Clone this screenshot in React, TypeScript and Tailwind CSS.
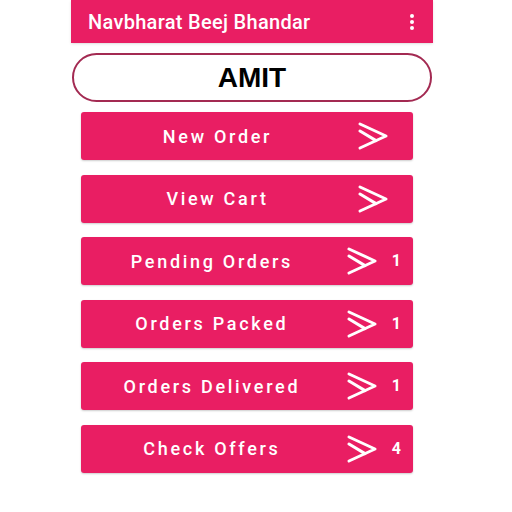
const items: { label: string; count?: number }[] = [
  { label: "New Order" },
  { label: "View Cart" },
  { label: "Pending Orders", count: 1 },
  { label: "Orders Packed", count: 1 },
  { label: "Orders Delivered", count: 1 },
  { label: "Check Offers", count: 4 },
];

function DoubleArrow() {
  return (
    <svg width="30" height="28" viewBox="0 0 30 28" fill="none" stroke="#ffffff" strokeWidth="3" strokeLinecap="round" strokeLinejoin="round" className="shrink-0">
      <path d="M2 2 L28 14 L2 26" />
      <path d="M2 9 L18 18.6" />
    </svg>
  );
}

export default function App() {
  return (
    <div className="w-[512px] h-[512px] bg-white font-['Roboto',sans-serif]">
      <div className="ml-[71px] w-[362px] flex flex-col">
        <div className="h-[43px] bg-[#e91e63] flex items-center pl-[17px] pr-[19px] shadow-sm">
          <span className="flex-1 text-white text-[20px] font-medium tracking-[0.3px]">Navbharat Beej Bhandar</span>
          <div className="flex flex-col gap-[2px]">
            <span className="w-[4px] h-[4px] rounded-full bg-white"></span>
            <span className="w-[4px] h-[4px] rounded-full bg-white"></span>
            <span className="w-[4px] h-[4px] rounded-full bg-white"></span>
          </div>
        </div>

        <div className="mt-[10px] ml-[1px] w-[360px] h-[49px] rounded-full border-2 border-[#a32a52] flex items-center justify-center">
          <span className="font-['Liberation_Sans',sans-serif] font-bold text-[28px] text-black">AMIT</span>
        </div>

        <div className="mt-[10px] ml-[10px] w-[332px] flex flex-col gap-[14.6px]">
          {items.map((it) => (
            <div key={it.label} className="h-[48px] bg-[#e91e63] rounded-[3px] flex items-center shadow-[0_1px_2px_rgba(0,0,0,0.2)]">
              <span className="flex-1 text-center text-white text-[18px] font-medium tracking-[2.7px]">{it.label}</span>
              <span className="ml-[4px]"><DoubleArrow /></span>
              {it.count !== undefined ? (
                <span className="ml-[15px] mr-[12px] text-white text-[16px] font-bold">{it.count}</span>
              ) : (
                <span className="mr-[25px]"></span>
              )}
            </div>
          ))}
        </div>
      </div>
    </div>
  );
}
